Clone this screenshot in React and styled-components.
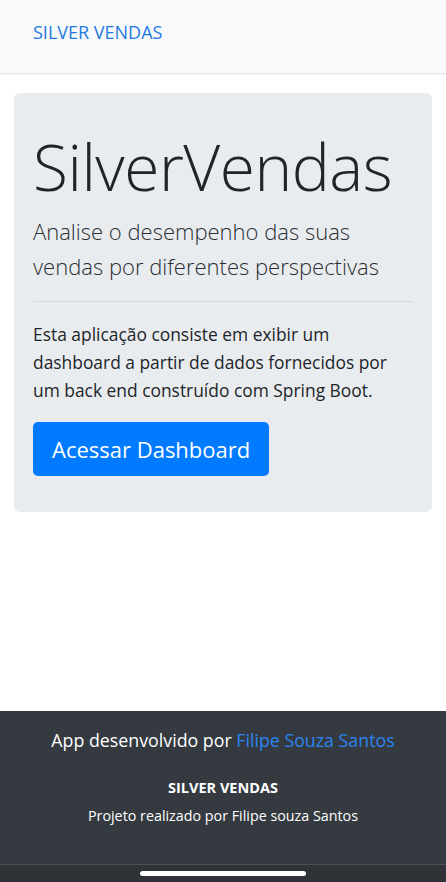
import React from "react";
import styled, { createGlobalStyle } from "styled-components";

const GlobalStyle = createGlobalStyle`
  * { box-sizing: border-box; }
  html, body { margin: 0; padding: 0; }
  body {
    font-family: "Open Sans", "Noto Sans", sans-serif;
    color: #212529;
    background: #ffffff;
  }
`;

const Page = styled.div`
  min-height: 100vh;
  display: flex;
  flex-direction: column;
`;

const Navbar = styled.nav`
  height: 74px;
  background-color: #f8f9fa;
  border-bottom: 1px solid #e3e5e8;
  box-shadow: 0 1px 3px rgba(0, 0, 0, 0.05);
  display: flex;
  align-items: center;
  padding: 0 33px;
`;

const Brand = styled.a`
  color: #1f7ae0;
  font-size: 18px;
  text-decoration: none;
  margin-top: -10px;
`;

const Main = styled.main`
  flex: 1;
  padding: 19px 14px 0 14px;
`;

const Jumbotron = styled.section`
  background-color: #e9ecef;
  border-radius: 6px;
  padding: 36px 19px 36px 19px;
`;

const Title = styled.h1`
  margin: 0;
  font-size: 64px;
  font-weight: 300;
  line-height: 1.2;
  letter-spacing: -0.5px;
`;

const Lead = styled.p`
  margin: 8px 0 0 0;
  font-size: 22px;
  font-weight: 300;
  line-height: 35px;
  color: #2b2f33;
`;

const Divider = styled.hr`
  margin: 17px 0 18px 0;
  border: 0;
  border-top: 1px solid #d5d8dc;
`;

const Text = styled.p`
  margin: 0;
  font-size: 17.4px;
  line-height: 28px;
`;

const Button = styled.a`
  display: inline-flex;
  align-items: center;
  justify-content: center;
  margin-top: 18px;
  height: 54px;
  padding: 0 19px;
  background-color: #007bff;
  color: #ffffff;
  font-size: 22px;
  border-radius: 5px;
  text-decoration: none;
`;

const Footer = styled.footer`
  background-color: #343a40;
  color: #ffffff;
  text-align: center;
  padding: 17px 16px 38px 16px;
  border-bottom: 1px solid #4a5057;
`;

const Credit = styled.p`
  margin: 0;
  font-size: 17.8px;
  line-height: 24px;
`;

const Link = styled.a`
  color: #2a85f0;
  text-decoration: none;
`;

const FooterTitle = styled.h6`
  margin: 26px 0 0 0;
  font-size: 14.5px;
  font-weight: 700;
  line-height: 20px;
`;

const FooterText = styled.p`
  margin: 8px 0 0 0;
  font-size: 14.3px;
  line-height: 20px;
`;

const HomeBar = styled.div`
  height: 17px;
  background-color: #2f3237;
  display: flex;
  justify-content: center;
  padding-top: 6px;
`;

const Indicator = styled.span`
  width: 166px;
  height: 5px;
  border-radius: 3px;
  background-color: #ffffff;
`;

export default function App() {
  return (
    <>
      <GlobalStyle />
      <Page>
        <Navbar>
          <Brand href="#">SILVER VENDAS</Brand>
        </Navbar>
        <Main>
          <Jumbotron>
            <Title>SilverVendas</Title>
            <Lead>Analise o desempenho das suas vendas por diferentes perspectivas</Lead>
            <Divider />
            <Text>
              Esta aplicação consiste em exibir um dashboard a partir de dados
              fornecidos por um back end construído com Spring Boot.
            </Text>
            <Button href="#">Acessar Dashboard</Button>
          </Jumbotron>
        </Main>
        <Footer>
          <Credit>
            App desenvolvido por <Link href="#">Filipe Souza Santos</Link>
          </Credit>
          <FooterTitle>SILVER VENDAS</FooterTitle>
          <FooterText>Projeto realizado por Filipe souza Santos</FooterText>
        </Footer>
        <HomeBar>
          <Indicator />
        </HomeBar>
      </Page>
    </>
  );
}
